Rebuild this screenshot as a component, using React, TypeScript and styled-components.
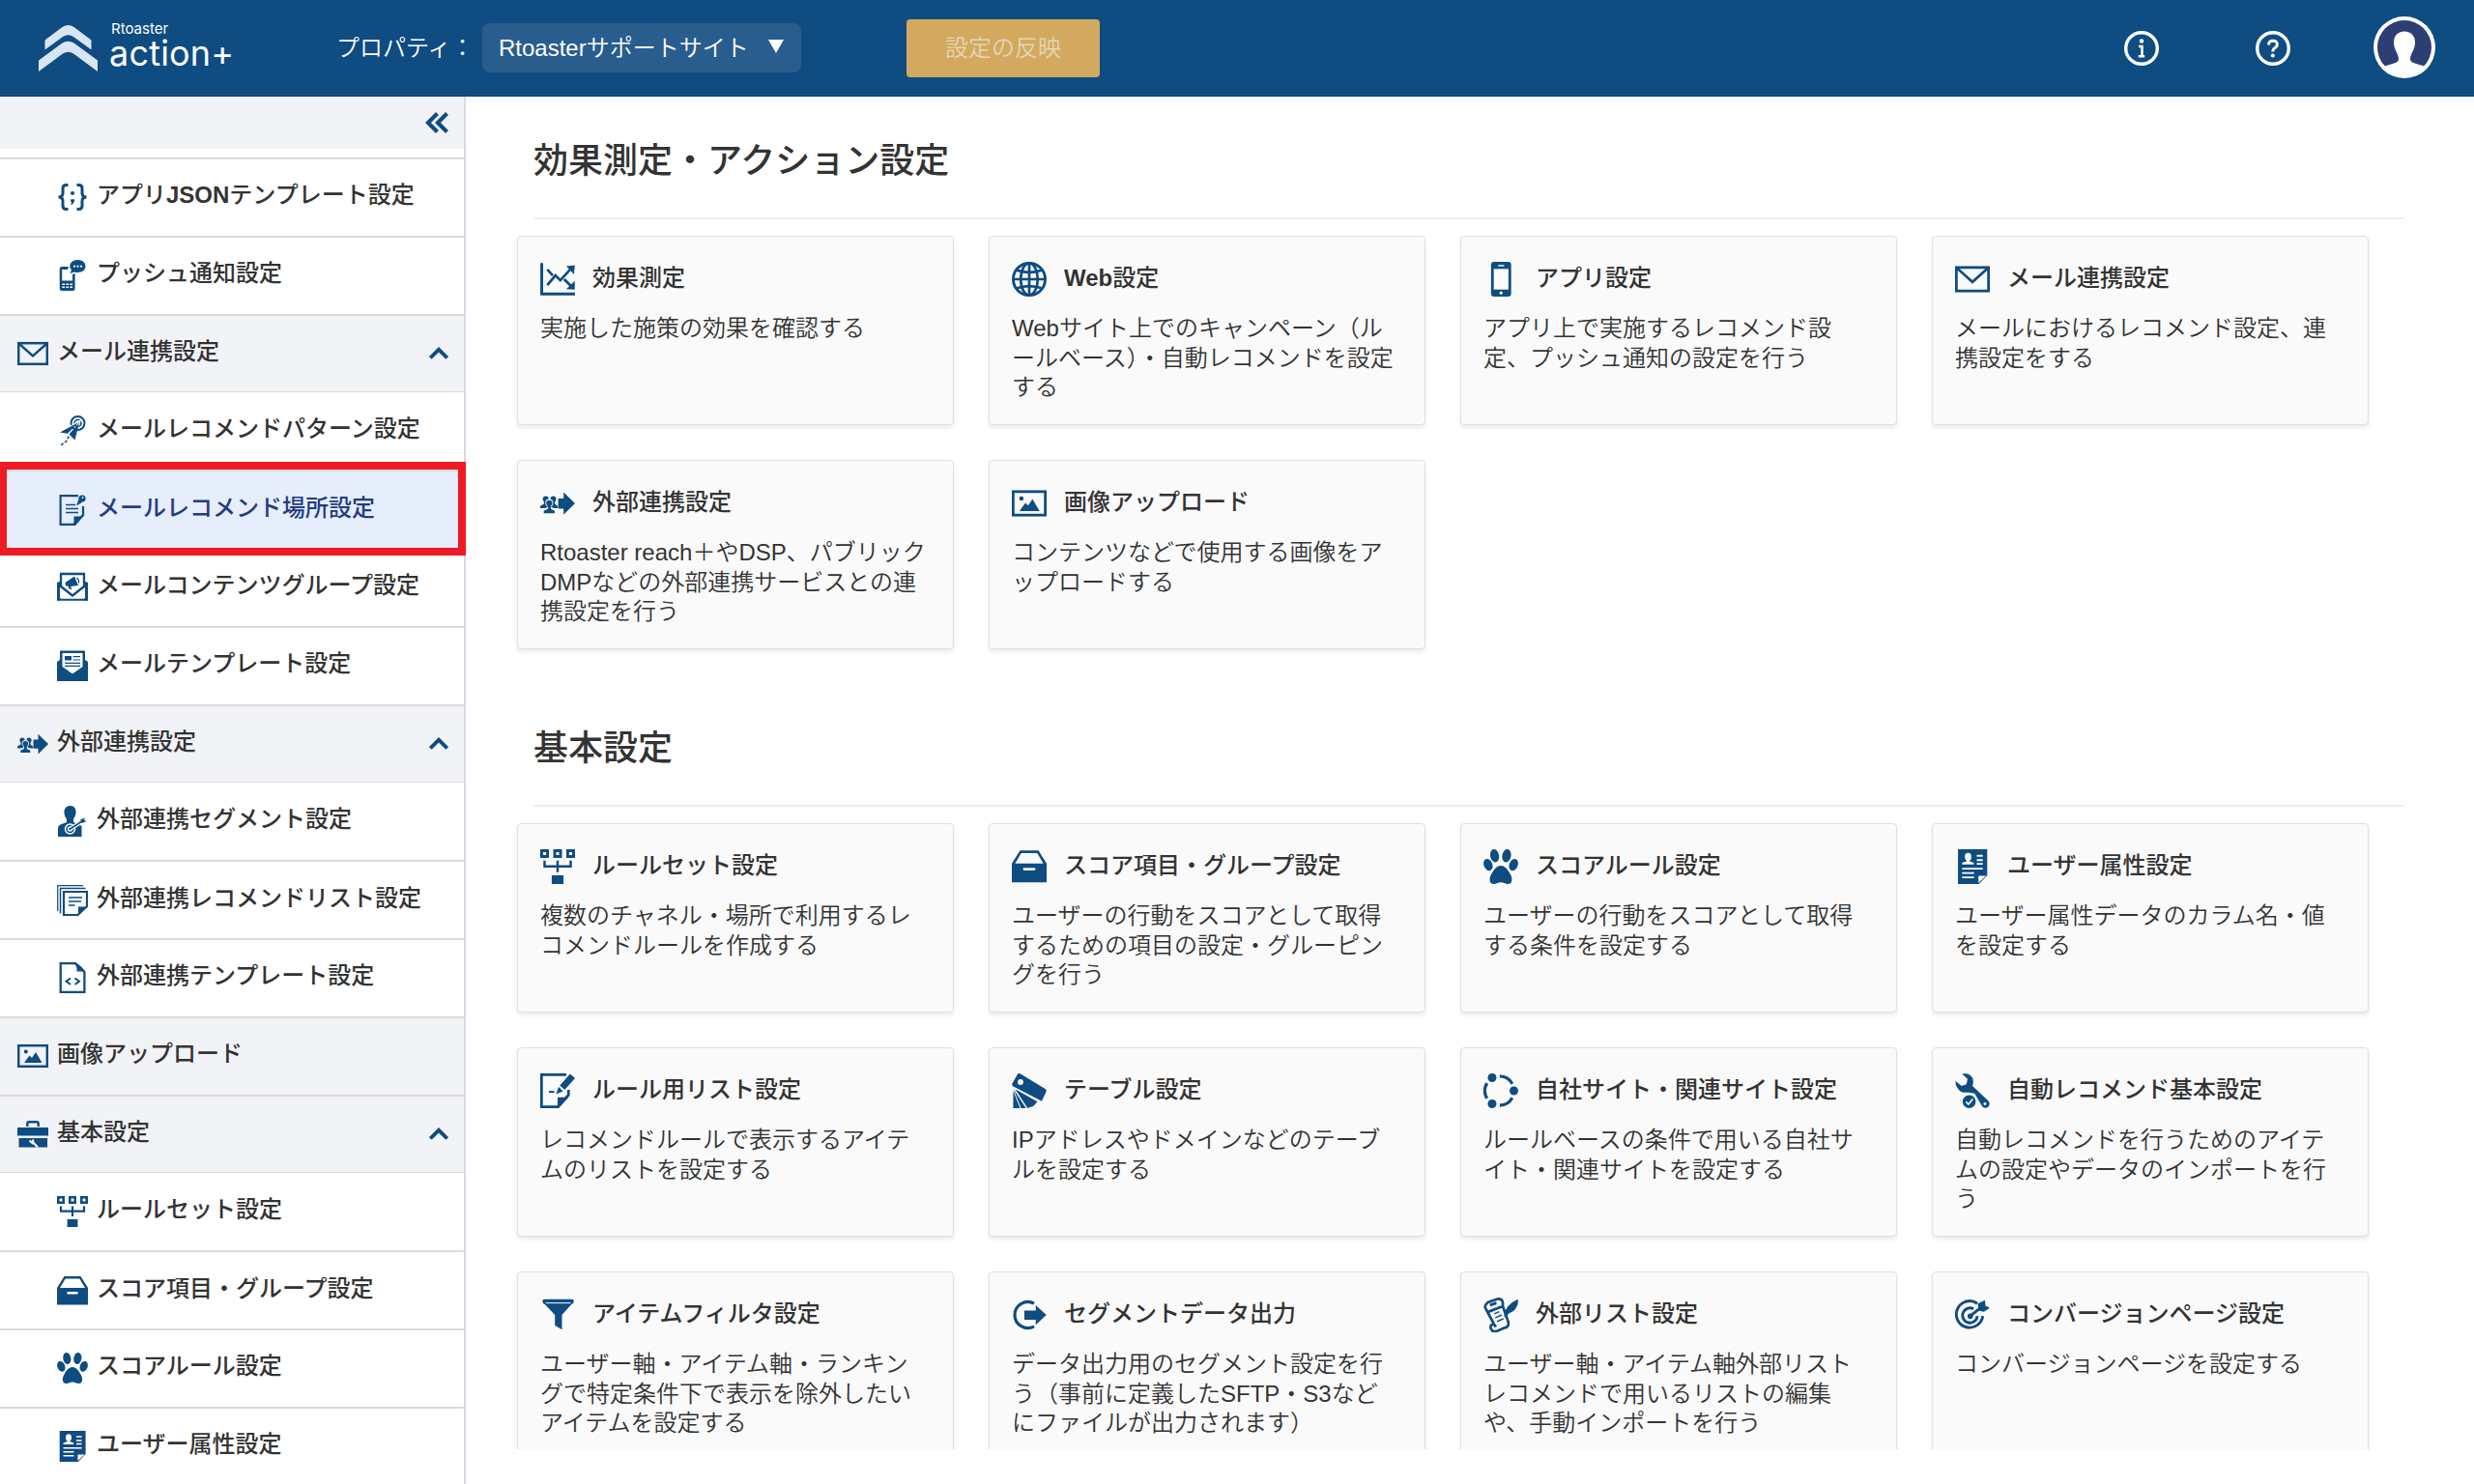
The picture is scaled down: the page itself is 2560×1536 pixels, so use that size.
import React from "react";
import styled, { createGlobalStyle, css } from "styled-components";

const NAVY = "#0f4c81";

const GlobalStyle = createGlobalStyle`
  *, *::before, *::after { box-sizing: border-box; }
  html, body { margin: 0; padding: 0; background: #fff; overflow: hidden; }
  body {
    font-family: "Liberation Sans", "Noto Sans CJK JP", sans-serif;
    font-size: 24px;
    font-weight: 350;
    color: #333;
  }
  h1, h2, h3, p, ul { margin: 0; padding: 0; }
`;

/* ---------- layout ---------- */

const Page = styled.div`
  display: flex;
  flex-direction: column;
  width: 2560px;
  height: 1536px;
  overflow: hidden;
`;

const Header = styled.header`
  display: flex;
  align-items: center;
  flex: none;
  height: 100px;
  padding: 0 40px;
  background: ${NAVY};
  border-bottom: 1px solid #0d3f6c;
  color: #fff;
`;

const Body = styled.div`
  display: flex;
  flex: 1;
  min-height: 0;
`;

/* ---------- header parts ---------- */

const Brand = styled.div`
  display: flex;
  align-items: center;
  width: 308px;
  gap: 12px;
`;

const BrandText = styled.div`
  display: flex;
  flex-direction: column;
  font-family: "Inter", "Liberation Sans", sans-serif;
  font-weight: 400;
  margin-top: -6px;
`;

const BrandSmall = styled.span`
  font-size: 15px;
  line-height: 16px;
  padding-left: 2px;
`;

const BrandLarge = styled.span`
  font-size: 36px;
  line-height: 34px;
  letter-spacing: 0.2px;
`;

const PropertyLabel = styled.span`
  width: 151px;
  white-space: nowrap;
  margin-top: -5px;
`;

const PropertySelect = styled.button`
  display: flex;
  align-items: center;
  justify-content: space-between;
  width: 330px;
  height: 51px;
  padding: 0 18px 5px 17px;
  border: 0;
  border-radius: 8px;
  background: #285d8e;
  color: #fff;
  font: inherit;
  white-space: nowrap;
`;

const Caret = styled.span`
  width: 0;
  height: 0;
  margin-top: 2px;
  border: 8px solid transparent;
  border-top: 14px solid #fff;
  border-bottom: 0;
`;

const ApplyButton = styled.button`
  width: 200px;
  height: 60px;
  margin-left: 109px;
  padding: 0 0 4px;
  border: 0;
  border-radius: 4px;
  background: #d2a95e;
  color: #e4d5b6;
  font: inherit;
`;

const HeaderActions = styled.div`
  display: flex;
  align-items: center;
  margin-left: auto;
  gap: 100px;
`;

const HeaderIcon = styled.svg`
  display: block;
  width: 36px;
  height: 36px;
`;

const Avatar = styled.svg`
  display: block;
  width: 64px;
  height: 64px;
  margin: -1px 0 0 -14px;
`;

/* ---------- sidebar ---------- */

const Sidebar = styled.aside`
  flex: none;
  width: 482px;
  border-right: 2px solid #d2d9e8;
  background: #fff;
`;

const CollapseBar = styled.div`
  display: flex;
  align-items: center;
  justify-content: flex-end;
  height: 54px;
  margin-bottom: 9px;
  padding-right: 15px;
  background: #f2f3f7;
  color: ${NAVY};
`;

const CollapseIcon = styled.svg`
  width: 25px;
  height: 22px;
`;

const NavList = styled.ul`
  list-style: none;
`;

const Strong = styled.span`
  font-weight: 700;
`;

const NavItem = styled.li<{ $kind: "group" | "item"; $selected?: boolean; $afterGroup?: boolean }>`
  --cut: #fff;
  position: relative;
  display: flex;
  align-items: center;
  height: 80.8px;
  padding: 0 16px 0 ${(p) => (p.$kind === "group" ? 18 : 59)}px;
  border-top: ${(p) => (p.$afterGroup ? 1 : 2)}px solid #dadada;
  font-weight: 500;
  white-space: nowrap;
  ${(p) => p.$kind === "group" && css`
    --cut: #f2f3f7;
    background: #f2f3f7;
  `}
  ${(p) => p.$selected && css`
    --cut: #e6edfb;
    background: #e6edfb;
    color: #243c80;
    &::after {
      content: "";
      position: absolute;
      z-index: 2;
      inset: -10px -2px -8px 0;
      border: 8px solid #ed1c24;
      border-left-width: 7px;
    }
  `}
`;

const NavLabel = styled.span`
  flex: 1;
  margin: -9px 0 0 9px;
`;

const IconBox = styled.svg<{ $size: number }>`
  display: block;
  flex: none;
  width: ${(p) => p.$size}px;
  height: ${(p) => p.$size}px;
  color: ${NAVY};
`;

const Chevron = styled.svg`
  width: 20px;
  height: 13px;
  color: ${NAVY};
`;

/* ---------- main ---------- */

const Main = styled.main`
  height: 1400px;
  padding-left: 53px;
  overflow: hidden;
`;

const Section = styled.section`
  margin-bottom: 36px;
`;

const SectionTitle = styled.h2`
  width: 1936px;
  height: 127px;
  margin: 0 0 17px 17px;
  padding-top: 40px;
  border-bottom: 2px solid #eee;
  font-size: 36px;
  font-weight: 500;
  line-height: 54px;
`;

const CardGrid = styled.div`
  display: grid;
  grid-template-columns: repeat(4, 452px);
  grid-auto-rows: 196px;
  gap: 36px;
`;

const Card = styled.article`
  --cut: #fafafa;
  padding: 25px 0 0 23px;
  border: 1.5px solid #e0e0e0;
  border-radius: 4px;
  background: #fafafa;
  box-shadow: 0 3px 4px rgba(0, 0, 0, 0.08);
`;

const CardHead = styled.div`
  display: flex;
  align-items: center;
  gap: 18px;
  height: 38px;
`;

const CardTitle = styled.h3`
  margin-top: -2px;
  font-size: 24px;
  font-weight: 500;
  line-height: 36px;
  white-space: nowrap;
`;

const CardText = styled.p`
  margin-top: 17px;
  line-height: 30.6px;
  white-space: pre;
`;

/* ---------- icons, drawn on a 32 x 32 grid ---------- */

const F = { fill: "currentColor" };
const S = (w: number) => ({ fill: "none", stroke: "currentColor", strokeWidth: w });
const C = { fill: "var(--cut)" };
const CS = (w: number) => ({ fill: "none", stroke: "var(--cut)", strokeWidth: w });

const people = (
  <>
    <circle cx="5" cy="12" r="2.6" {...F} />
    <circle cx="12" cy="12" r="2.6" {...F} />
    <path d="M0 20.5V18.5L3.5 16.5V14H6.5V17L9 18.5V20.5Z" {...F} />
    <path d="M8 20.5V18.5L10.5 17V14H13.5V16.5L16 18.5V20.5Z" {...F} />
    <circle cx="8.3" cy="15.6" r="3.6" {...C} />
    <path d="M2.5 26V21.5L7 19H10L14.5 21.5V26Z" {...C} />
    <circle cx="8.3" cy="15.8" r="2.8" {...F} />
    <path d="M3.3 25V22.8L7 21V18H9.7V21L13.3 22.8V25Z" {...F} />
  </>
);

const icons: Record<string, React.ReactNode> = {
  json: (
    <>
      <path d="M11.500 3.500H9.500Q6 3.500 6 7V12Q6 16 1.500 16Q6 16 6 20V25Q6 28.500 9.500 28.500H11.500" {...S(3)} />
      <path d="M20.500 3.500H22.500Q26 3.500 26 7V12Q26 16 30.500 16Q26 16 26 20V25Q26 28.500 22.500 28.500H20.500" {...S(3)} />
      <circle cx="16" cy="12" r="2" {...F} />
      <path d="M14.200 18.300H18V20.500L15.800 23.800H14.200L15.200 21H14.200Z" {...F} />
    </>
  ),
  push: (
    <>
      <path d="M12 7H5Q2.700 7 2.700 9.300V29.700Q2.700 32 5 32H16.300Q18.600 32 18.600 29.700V14L16 15V21.500H5.200V10H11Z" {...F} />
      <path d="M21.300 0C26 0 29.500 2.800 29.500 6.500S26 13 21.500 13Q19.500 13 18 12.400L13.500 14L15 10.300Q13.300 8.700 13.300 6.500C13.300 2.800 17 0 21.300 0Z" {...F} />
      <path d="M17 6.700H19M20.500 6.700H22.500M24 6.700H26" {...CS(1.7)} />
      <path d="M5.300 25.200H8M9.300 25.200H12M13.300 25.200H16M5.300 28.200H8M9.300 28.200H12M13.300 28.200H16" {...CS(1.4)} />
    </>
  ),
  mail: (
    <>
      <rect x="1.200" y="5.200" width="29.600" height="21.600" {...S(2.5)} />
      <path d="M1.500 5.500L16 18.500L30.500 5.500" {...S(2.400)} />
    </>
  ),
  pattern: (
    <>
      <circle cx="21.500" cy="8" r="7" {...S(2)} />
      <circle cx="21.500" cy="8" r="3.500" {...S(1.600)} />
      <path d="M23.500 6L4 17.500L11 18.500L13 20L15.500 25Z" {...CS(2)} />
      <path d="M22.500 7L3 17.500L11 18.800Z" {...F} />
      <path d="M23 7.500L12.500 19.500L18.500 25.500Z" {...F} />
      <path d="M12 21.500L10.500 26L3 31.500" {...S(1.600)} strokeDasharray="3 1.800" />
    </>
  ),
  place: (
    <>
      <path d="M22 1.200H3.600V30.800H17L27 21V12" {...S(2.200)} />
      <path d="M17.500 32V22.500H28V21.500L19 32Z" {...F} />
      <path d="M9 10.500H19M9 14.500H22M9 18.500H22" {...S(1.600)} />
      <circle cx="26" cy="4" r="3.600" {...F} />
      <path d="M22.500 4.500L26 8L20 11.500Z" {...F} />
      <circle cx="26.500" cy="3" r="1" {...C} />
    </>
  ),
  mailGroup: (
    <>
      <path d="M0 11L4 9.500V29L0 29.500ZM28 9.500L32 11V29.500H28Z" {...F} />
      <path d="M3 15.500L14.500 25L3 27.500ZM29 15.500L17.500 25L29 27.500Z" {...C} />
      <path d="M1 13V28.800H31V13L16 24Z" {...S(2)} />
      <path d="M4 15V2H28V15L16 24.500Z" fill="var(--cut)" stroke="currentColor" strokeWidth="2.300" />
      <path d="M8.500 11L18 4.500L22 14L14 15L15.500 18L12.500 17.500L11.500 14.500H9Z" {...F} />
      <path d="M20.500 6Q23 8 22.500 11.500" {...S(1.200)} />
    </>
  ),
  mailTemplate: (
    <>
      <path d="M0 12L3 10V0.500H29V10L32 12V32H0Z" {...F} />
      <path d="M5.500 3H26.500V17L16 24.500L5.500 17Z" {...C} />
      <rect x="8" y="6" width="7" height="4.500" {...F} />
      <path d="M16.500 6.700H24M16.500 10H24M8 13.300H24M8 16.300H24" {...S(1.200)} />
    </>
  ),
  external: (
    <>
      {people}
      <path d="M16.500 11.500H21.500V5.800L32 16L21.500 26.500V20.800H16.500Z" {...F} />
    </>
  ),
  segment: (
    <>
      <path d="M13.500 0C18 0 20 3.500 19.500 7.500C19.200 11 17.500 12.500 17 14V17L22 19L25.500 21V32H1V23Q1 20.500 3.500 19.500L10 17V14C9 12.500 7.800 11 7.500 7.500C7 3.500 9.500 0 13.500 0Z" {...F} />
      <circle cx="13.500" cy="24" r="5" {...CS(1.500)} />
      <circle cx="13.500" cy="24" r="2" {...CS(1.300)} />
      <path d="M13.500 24L27 15.500" {...CS(4)} />
      <path d="M13.500 24L26 16" {...S(1.700)} />
      <path d="M24 14.500L29 12.500L28 15L30.500 16L26 18Z" {...F} />
    </>
  ),
  list: (
    <>
      <path d="M0.700 27V0.700H27" {...S(1.200)} />
      <path d="M3.500 29.500V3.500H29.500" {...S(1.500)} />
      <path d="M7 7H31V22L21.500 31H7Z" {...S(2.200)} />
      <path d="M22 31V22.500H31Z" {...F} />
      <path d="M12 13H26M12 17H25M12 21H18.500" {...S(1.400)} />
    </>
  ),
  code: (
    <>
      <path d="M3.700 1.200H19L28.400 10V30.800H3.700Z" {...S(2.300)} />
      <path d="M18 1Q21 4 20.500 9.500H29Q25 3 18 0Z" {...F} />
      <path d="M14 16.500L9.500 19.800L14 23M18.500 16.500L23 19.800L18.500 23" {...S(2)} />
    </>
  ),
  image: (
    <>
      <rect x="1.200" y="5.200" width="29.600" height="21.600" {...S(2.500)} />
      <circle cx="8.800" cy="11.500" r="2" {...F} />
      <path d="M7 23L12.500 15.500L15 18L19 12L25.500 23Z" {...F} />
    </>
  ),
  toolbox: (
    <>
      <path d="M10.300 8V5Q10.300 3.300 12 3.300H20Q21.700 3.300 21.700 5V8" {...S(2.400)} />
      <rect x="0" y="9" width="32" height="8.500" {...F} />
      <path d="M1.500 20H31V29.500H1.500Z" {...F} />
      <path d="M15 23L21 29.500M12.500 22.500L15.500 25L16.500 21.500" {...CS(2.200)} />
    </>
  ),
  ruleset: (
    <>
      <path d="M1.300 1.300H6.700V6.700H1.300ZM13.300 1.300H18.700V6.700H13.300ZM25.300 1.300H30.700V6.700H25.300Z" {...S(2.600)} />
      <path d="M4 10.500V15.700H28V10.500M16 10.500V21" {...S(2.200)} />
      <rect x="10.600" y="24" width="10.800" height="8" {...F} />
    </>
  ),
  drawer: (
    <>
      <path d="M7.500 1H24.500L32 13V30.500H0V13Z" {...F} />
      <path d="M8.700 3.500H23.300L29 13H3Z" {...C} />
      <path d="M11.500 18.300H20.500" {...CS(2.400)} strokeLinecap="round" />
    </>
  ),
  paw: (
    <>
      <ellipse cx="10.300" cy="6" rx="4" ry="6" transform="rotate(-10 10.300 6)" {...F} />
      <ellipse cx="21.300" cy="6" rx="4" ry="6" transform="rotate(10 21.300 6)" {...F} />
      <ellipse cx="4.300" cy="14.300" rx="3.900" ry="5.600" transform="rotate(-22 4.300 14.300)" {...F} />
      <ellipse cx="27.700" cy="14.300" rx="3.900" ry="5.600" transform="rotate(22 27.700 14.300)" {...F} />
      <path d="M16 15C20 15 22.500 19 24.500 22.500C27 26.500 27 32 22.500 32C20 32 18.500 30.500 16 30.500S12 32 9.500 32C5 32 5 26.500 7.500 22.500C9.500 19 12 15 16 15Z" {...F} />
    </>
  ),
  userAttr: (
    <>
      <path d="M2.700 0H29.600V24L22 32H2.700Z" {...F} />
      <path d="M21.500 31V24.500H28.500Z" {...C} />
      <ellipse cx="12" cy="7" rx="3" ry="3.700" {...C} />
      <path d="M6.500 14V12.500L10.700 11V9H13.300V11L17.300 12.500V14Z" {...C} />
      <path d="M20 6H25.500M20 10H25.500M20 13.500H25.500M6.500 17.800H25.500M6.500 21.800H17.500M6.500 25.800H17.500" {...CS(1.600)} />
    </>
  ),
  chart: (
    <>
      <path d="M1.400 1V29.500H32" {...S(2.600)} />
      <path d="M6.500 21.500L14 12.500L18.500 17L28 6.500" {...S(2.400)} />
      <path d="M24 4L31.800 3L31 11.500Z" {...F} />
      <path d="M6.500 7L11.500 12.500M22 16L28.500 22.500" {...S(2.400)} />
      <path d="M31.800 17.500V25.500L24 25Z" {...F} />
    </>
  ),
  globe: (
    <>
      <circle cx="16" cy="16" r="14.700" {...S(2.600)} />
      <ellipse cx="16" cy="16" rx="7.800" ry="14.700" {...S(2.400)} />
      <path d="M16 1V31M1 16H31M4 7.500Q16 12 28 7.500M4 24.500Q16 20 28 24.500" {...S(2.400)} />
    </>
  ),
  phone: (
    <>
      <rect x="7" y="0" width="18.500" height="32" rx="2.800" {...F} />
      <rect x="9.500" y="6.500" width="13.500" height="19" {...C} />
      <path d="M13.500 3.500H19" {...CS(1.300)} />
      <circle cx="16.200" cy="28.600" r="1.400" {...C} />
    </>
  ),
  listEdit: (
    <>
      <path d="M24 1.200H1.200V30.800H16L26 20V15" {...S(2.500)} />
      <path d="M16 32V22H26.500L26 22L17 32Z" {...F} />
      <path d="M17.500 12L28 0L32 4L21 16.500L15.500 18Z" {...CS(2)} />
      <path d="M27.500 0.500L32 4.500L22.500 15L18 11Z" {...F} />
      <path d="M17 12.500L21 16.500L14.500 19Z" {...F} />
      <path d="M8 17H13" {...S(1.800)} />
    </>
  ),
  swatches: (
    <>
      <path d="M5.500 0.500Q6.500 -0.500 8 0.500L31 14.500Q32 15.500 31.500 17L27.500 25.500L0.500 11.500Q0 10 0.500 9Z" {...F} />
      <circle cx="8" cy="8" r="2.600" {...C} />
      <path d="M3 14.500L23.500 26L20 30L14.500 32Z" {...F} />
      <path d="M1.500 14.500L13 32H8.500Z" {...F} />
      <path d="M1.300 16L7.500 32H1.300Z" {...F} />
    </>
  ),
  ring: (
    <>
      <circle cx="8" cy="4" r="4" {...F} />
      <circle cx="28" cy="16" r="4" {...F} />
      <circle cx="8" cy="28" r="4" {...F} />
      <path d="M15 2.500A13.500 13.500 0 0 1 26.500 9.500M26.500 22.500A13.500 13.500 0 0 1 15 29.500M3.300 23A13.500 13.500 0 0 1 3.300 9" {...S(2.900)} />
    </>
  ),
  wrench: (
    <>
      <path d="M0.500 7L6 11.500L10.500 10L11.500 5L6.500 0.500Q13 -1 16 4Q17.500 8 16 11.500L30.500 25Q33 28 30.500 30.800Q27.500 33 25 30.500L18 18.500L12 17.500Q5 18.500 2 13Q0 10 0.500 7Z" {...F} />
      <circle cx="27.500" cy="28" r="1.300" {...C} />
      <circle cx="13" cy="26" r="7" {...C} />
      <circle cx="13" cy="26" r="6" {...F} />
      <path d="M10 26L12.300 28.500L16.300 23.500" {...CS(1.500)} />
    </>
  ),
  funnel: (
    <>
      <path d="M2 3Q2 1.500 4 1.500H29Q31 1.500 31 3Q31 5 28.500 6.500L20 16V29.500L13.500 25.500V16L4.500 6.500Q2 5 2 3Z" {...F} />
      <path d="M5 5H28" {...CS(0.9)} />
    </>
  ),
  output: (
    <>
      <path d="M20.500 5.500A12 12 0 1 0 20.500 26.500" {...S(2.800)} />
      <path d="M11.500 12H22V7L31.800 16L22 25V20.500H11.500Z" {...F} />
    </>
  ),
  quill: (
    <>
      <path d="M1.500 10Q1 7 4 4.500L13 1.300Q17.500 1 17.800 5V8L22 20Q25 27 19 28L12 31Q7 32 6.500 27Q7 24 10 25L11.500 27M2 10L10 25M5 13Q10 11 17.800 8M6 7L12 5" {...S(2.400)} strokeLinejoin="round" />
      <path d="M31.500 1.500Q33 6 29 11Q26 14 23.500 14.500L20.500 18.500L19 17Q19.500 7 31.500 1.500Z" {...F} />
      <path d="M10 15L14.500 13M11 18.500L17 16M12.500 22L18.500 19.500" {...S(1.300)} />
    </>
  ),
  target: (
    <>
      <path d="M20.500 5.500A12.200 12.200 0 1 0 25.500 17" {...S(2.600)} />
      <path d="M17 10.500A6.800 6.800 0 1 0 20.500 17" {...S(2.600)} />
      <circle cx="14" cy="17.200" r="2.500" {...F} />
      <path d="M14 17L24 9" {...S(2.600)} />
      <path d="M21 5.500L27.500 2.500L28 7.500L32 9.500L26.500 13L21.500 12Z" {...F} />
    </>
  ),
};

const Icon = ({ name, size }: { name: string; size: number }) => (
  <IconBox viewBox="0 0 32 32" $size={size} aria-hidden="true">
    {icons[name]}
  </IconBox>
);

/* Latin words inside a label carry the full bold weight. */
const Label = ({ text }: { text: string }) => (
  <>
    {text.split(/([A-Za-z]+)/).map((part, i) =>
      i % 2 === 1 ? <Strong key={i}>{part}</Strong> : part
    )}
  </>
);

/* ---------- content ---------- */

type Nav = { label: string; icon: string; kind: "group" | "item"; open?: boolean; selected?: boolean };

const nav: Nav[] = [
  { label: "アプリJSONテンプレート設定", icon: "json", kind: "item" },
  { label: "プッシュ通知設定", icon: "push", kind: "item" },
  { label: "メール連携設定", icon: "mail", kind: "group", open: true },
  { label: "メールレコメンドパターン設定", icon: "pattern", kind: "item" },
  { label: "メールレコメンド場所設定", icon: "place", kind: "item", selected: true },
  { label: "メールコンテンツグループ設定", icon: "mailGroup", kind: "item" },
  { label: "メールテンプレート設定", icon: "mailTemplate", kind: "item" },
  { label: "外部連携設定", icon: "external", kind: "group", open: true },
  { label: "外部連携セグメント設定", icon: "segment", kind: "item" },
  { label: "外部連携レコメンドリスト設定", icon: "list", kind: "item" },
  { label: "外部連携テンプレート設定", icon: "code", kind: "item" },
  { label: "画像アップロード", icon: "image", kind: "group" },
  { label: "基本設定", icon: "toolbox", kind: "group", open: true },
  { label: "ルールセット設定", icon: "ruleset", kind: "item" },
  { label: "スコア項目・グループ設定", icon: "drawer", kind: "item" },
  { label: "スコアルール設定", icon: "paw", kind: "item" },
  { label: "ユーザー属性設定", icon: "userAttr", kind: "item" },
];

const sections = [
  {
    title: "効果測定・アクション設定",
    cards: [
      { icon: "chart", title: "効果測定", text: "実施した施策の効果を確認する" },
      { icon: "globe", title: "Web設定", text: "Webサイト上でのキャンペーン（ル\nールベース）・自動レコメンドを設定\nする" },
      { icon: "phone", title: "アプリ設定", text: "アプリ上で実施するレコメンド設\n定、プッシュ通知の設定を行う" },
      { icon: "mail", title: "メール連携設定", text: "メールにおけるレコメンド設定、連\n携設定をする" },
      { icon: "external", title: "外部連携設定", text: "Rtoaster reach＋やDSP、パブリック\nDMPなどの外部連携サービスとの連\n携設定を行う" },
      { icon: "image", title: "画像アップロード", text: "コンテンツなどで使用する画像をア\nップロードする" },
    ],
  },
  {
    title: "基本設定",
    cards: [
      { icon: "ruleset", title: "ルールセット設定", text: "複数のチャネル・場所で利用するレ\nコメンドルールを作成する" },
      { icon: "drawer", title: "スコア項目・グループ設定", text: "ユーザーの行動をスコアとして取得\nするための項目の設定・グルーピン\nグを行う" },
      { icon: "paw", title: "スコアルール設定", text: "ユーザーの行動をスコアとして取得\nする条件を設定する" },
      { icon: "userAttr", title: "ユーザー属性設定", text: "ユーザー属性データのカラム名・値\nを設定する" },
      { icon: "listEdit", title: "ルール用リスト設定", text: "レコメンドルールで表示するアイテ\nムのリストを設定する" },
      { icon: "swatches", title: "テーブル設定", text: "IPアドレスやドメインなどのテーブ\nルを設定する" },
      { icon: "ring", title: "自社サイト・関連サイト設定", text: "ルールベースの条件で用いる自社サ\nイト・関連サイトを設定する" },
      { icon: "wrench", title: "自動レコメンド基本設定", text: "自動レコメンドを行うためのアイテ\nムの設定やデータのインポートを行\nう" },
      { icon: "funnel", title: "アイテムフィルタ設定", text: "ユーザー軸・アイテム軸・ランキン\nグで特定条件下で表示を除外したい\nアイテムを設定する" },
      { icon: "output", title: "セグメントデータ出力", text: "データ出力用のセグメント設定を行\nう（事前に定義したSFTP・S3など\nにファイルが出力されます）" },
      { icon: "quill", title: "外部リスト設定", text: "ユーザー軸・アイテム軸外部リスト\nレコメンドで用いるリストの編集\nや、手動インポートを行う" },
      { icon: "target", title: "コンバージョンページ設定", text: "コンバージョンページを設定する" },
    ],
  },
];

export default function App() {
  return (
    <Page>
      <GlobalStyle />
      <Header>
        <Brand>
          <svg width="61" height="48" viewBox="0 0 61 48" aria-hidden="true">
            <path d="M6.500 15.500L24.500 2Q30.500 -1.800 36.500 2L54.500 15.500V25.500L36 12Q30.500 8.500 25 12L6.500 25.500Z" fill="#d8e5f2" />
            <path d="M0 36.500L24.500 18.500Q30.500 14.800 36.500 18.500L61 36.500V48L36 29.500Q30.500 26 25 29.500L0 48Z" fill="#d8e5f2" />
          </svg>
          <BrandText>
            <BrandSmall>Rtoaster</BrandSmall>
            <BrandLarge>action+</BrandLarge>
          </BrandText>
        </Brand>
        <PropertyLabel>プロパティ：</PropertyLabel>
        <PropertySelect>
          Rtoasterサポートサイト
          <Caret />
        </PropertySelect>
        <ApplyButton>設定の反映</ApplyButton>
        <HeaderActions>
          <HeaderIcon viewBox="0 0 36 36">
            <circle cx="18" cy="18" r="16.300" fill="none" stroke="#fff" strokeWidth="3.400" />
            <circle cx="18" cy="10.500" r="2.200" fill="#fff" />
            <path d="M15 16H18.500V26M14.800 26.200H21.200" fill="none" stroke="#fff" strokeWidth="2.600" />
          </HeaderIcon>
          <HeaderIcon viewBox="0 0 36 36">
            <circle cx="18" cy="18" r="16.300" fill="none" stroke="#fff" strokeWidth="3.400" />
            <path d="M13.500 14.500Q13.500 10.300 18 10.300T22.300 14Q22.300 16.300 19.800 17.700Q17.800 18.800 17.800 21.500" fill="none" stroke="#fff" strokeWidth="2.900" />
            <circle cx="17.800" cy="25.400" r="2" fill="#fff" />
          </HeaderIcon>
          <Avatar viewBox="0 0 64 64">
            <circle cx="32" cy="32" r="32" fill="#fff" />
            <circle cx="32" cy="32" r="28" fill="#2d3e75" />
            <path d="M32 15.500C39 15.500 43.500 20.500 43 28C42.500 35 38 39 38 44C38 48.500 44 48.500 52.500 51.500Q44 61.500 32 61.500T11.500 51.500C20 48.500 26 48.500 26 44C26 39 21.500 35 21 28C20.500 20.500 25 15.500 32 15.500Z" fill="#fff" />
          </Avatar>
        </HeaderActions>
      </Header>
      <Body>
        <Sidebar>
          <CollapseBar>
            <CollapseIcon viewBox="0 0 25 22">
              <path d="M12.500 1.500L3 11L12.500 20.500M22.500 1.500L13 11L22.500 20.500" fill="none" stroke="currentColor" strokeWidth="4.200" />
            </CollapseIcon>
          </CollapseBar>
          <NavList>
            {nav.map((n, i) => (
              <NavItem
                key={n.label}
                $kind={n.kind}
                $selected={n.selected}
                $afterGroup={i > 0 && n.kind === "item" && nav[i - 1].kind === "group"}
              >
                <Icon name={n.icon} size={32} />
                <NavLabel><Label text={n.label} /></NavLabel>
                {n.open && (
                  <Chevron viewBox="0 0 20 13">
                    <path d="M1.300 11.500L10 2.800L18.700 11.500" fill="none" stroke="currentColor" strokeWidth="3.800" />
                  </Chevron>
                )}
              </NavItem>
            ))}
          </NavList>
        </Sidebar>
        <Main>
          {sections.map((s) => (
            <Section key={s.title}>
              <SectionTitle>{s.title}</SectionTitle>
              <CardGrid>
                {s.cards.map((c) => (
                  <Card key={c.title}>
                    <CardHead>
                      <Icon name={c.icon} size={36} />
                      <CardTitle><Label text={c.title} /></CardTitle>
                    </CardHead>
                    <CardText>{c.text}</CardText>
                  </Card>
                ))}
              </CardGrid>
            </Section>
          ))}
        </Main>
      </Body>
    </Page>
  );
}
